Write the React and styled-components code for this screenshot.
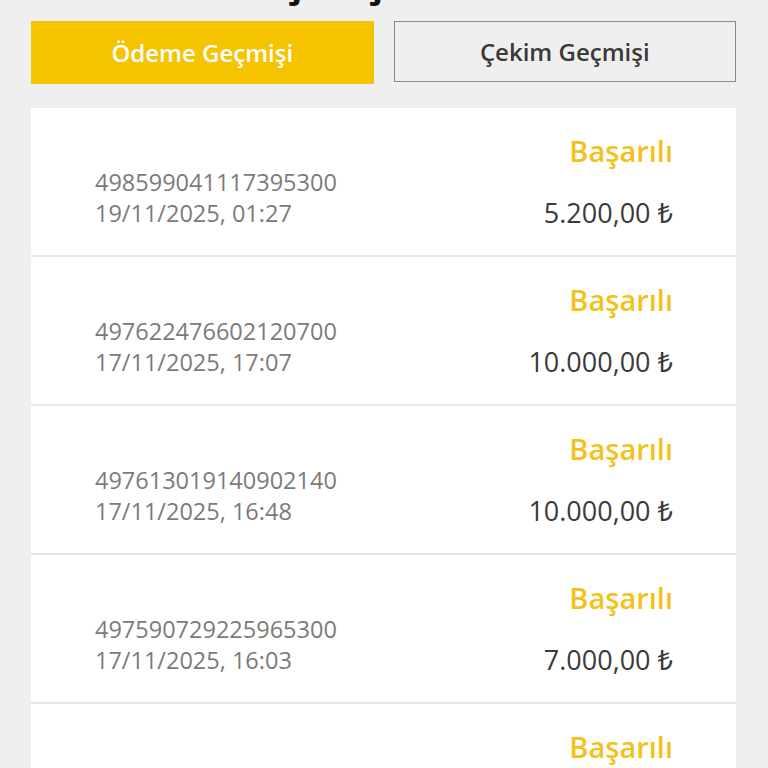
import React, { useState } from "react";
import styled, { createGlobalStyle } from "styled-components";

const GlobalStyle = createGlobalStyle`
  html, body {
    margin: 0;
    padding: 0;
    background: #efefef;
    font-family: "Open Sans", "Noto Sans", "DejaVu Sans", sans-serif;
  }
  * { box-sizing: border-box; }
`;

const Page = styled.div`
  padding: 0 32px 0 31px;
  overflow: hidden;
  height: 768px;
`;

// page title scrolled mostly out of view, only the cedillas peek in
const Title = styled.h1`
  margin: -51px 0 0 12px;
  height: 56px;
  font-size: 46px;
  line-height: 56px;
  font-weight: 700;
  color: #111;
  white-space: nowrap;
`;

const Tabs = styled.div`
  display: grid;
  grid-template-columns: 1fr 1fr;
  gap: 20px;
  align-items: start;
  margin-top: 16px;
`;

const Tab = styled.button`
  height: ${(p) => (p.active ? "63px" : "61px")};
  border: ${(p) => (p.active ? "none" : "1.5px solid #8a8a8a")};
  background: ${(p) => (p.active ? "#f6c300" : "#efefef")};
  color: ${(p) => (p.active ? "#fff" : "#3a3a3a")};
  font-family: inherit;
  font-size: 24px;
  font-weight: 600;
  cursor: pointer;
  padding: 0;
`;

const List = styled.div`
  margin-top: 24px;
  background: #fff;
`;

const Row = styled.div`
  display: flex;
  justify-content: space-between;
  align-items: flex-end;
  padding: 27px 63px 26px 64px;
  border-bottom: 2px solid #e6e6e6;
`;

const Info = styled.div`
  display: flex;
  flex-direction: column;
  color: #7b7b7b;
  font-size: 23.5px;
  line-height: 31px;
`;

const Side = styled.div`
  display: flex;
  flex-direction: column;
  align-items: flex-end;
  gap: 30px;
`;

const Status = styled.div`
  color: #f3c21a;
  font-size: 29px;
  font-weight: 600;
  line-height: 32px;
`;

const Amount = styled.div`
  color: #3a3a3a;
  font-size: 27px;
  line-height: 32px;
`;

const payments = [
  { id: "498599041117395300", date: "19/11/2025, 01:27", amount: "5.200,00 ₺" },
  { id: "497622476602120700", date: "17/11/2025, 17:07", amount: "10.000,00 ₺" },
  { id: "497613019140902140", date: "17/11/2025, 16:48", amount: "10.000,00 ₺" },
  { id: "497590729225965300", date: "17/11/2025, 16:03", amount: "7.000,00 ₺" },
  { id: "497512884310257400", date: "17/11/2025, 14:21", amount: "5.000,00 ₺" },
];

export default function App() {
  const [tab, setTab] = useState("odeme");

  return (
    <>
      <GlobalStyle />
      <Page>
        <Title>Ödeme Geçmişi</Title>
        <Tabs>
          <Tab active={tab === "odeme"} onClick={() => setTab("odeme")}>
            Ödeme Geçmişi
          </Tab>
          <Tab active={tab === "cekim"} onClick={() => setTab("cekim")}>
            Çekim Geçmişi
          </Tab>
        </Tabs>
        <List>
          {payments.map((p) => (
            <Row key={p.id}>
              <Info>
                <span>{p.id}</span>
                <span>{p.date}</span>
              </Info>
              <Side>
                <Status>Başarılı</Status>
                <Amount>{p.amount}</Amount>
              </Side>
            </Row>
          ))}
        </List>
      </Page>
    </>
  );
}
